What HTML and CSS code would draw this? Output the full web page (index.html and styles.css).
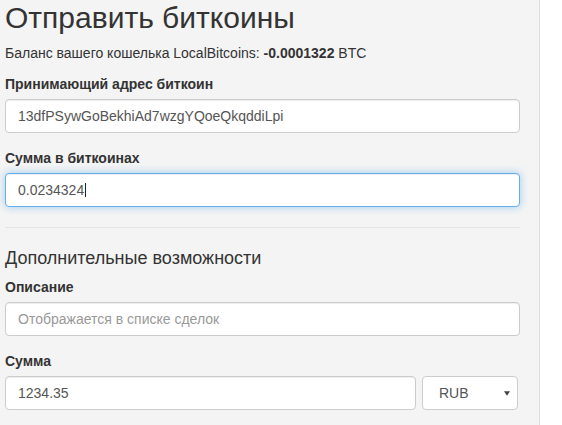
FILE: index.html
```html
<!DOCTYPE html>
<html lang="ru">
<head>
<meta charset="utf-8">
<title>Отправить биткоины</title>
<link rel="stylesheet" href="styles.css">
</head>
<body>
<div class="panel">
  <h1 class="title">Отправить биткоины</h1>
  <p class="balance">Баланс вашего кошелька LocalBitcoins: <b>-0.0001322</b> BTC</p>

  <div class="group">
    <label class="label">Принимающий адрес биткоин</label>
    <input class="field" type="text" value="13dfPSywGoBekhiAd7wzgYQoeQkqddiLpi">
  </div>

  <div class="group">
    <label class="label">Сумма в биткоинах</label>
    <div class="field focused">0.0234324<span class="caret"></span></div>
  </div>

  <hr class="divider">

  <h3 class="subtitle">Дополнительные возможности</h3>

  <div class="group first">
    <label class="label">Описание</label>
    <input class="field" type="text" placeholder="Отображается в списке сделок">
  </div>

  <div class="group">
    <label class="label">Сумма</label>
    <div class="row">
      <input class="field amount" type="text" value="1234.35">
      <div class="select">
        <span>RUB</span>
        <svg class="arrow" width="7" height="5" viewBox="0 0 7 5"><path d="M0 0H7L3.5 5Z" fill="#444"/></svg>
      </div>
    </div>
  </div>
</div>
</body>
</html>
```

FILE: styles.css
```css
html, body {
  margin: 0;
  padding: 0;
  background: #ffffff;
}
body {
  font-family: "Liberation Sans", Arial, sans-serif;
  font-size: 14px;
  color: #333333;
}
.panel {
  box-sizing: border-box;
  width: 540px;
  min-height: 425px;
  background: #f4f4f4;
  border-right: 1px solid #dddddd;
  padding: 0 19px 0 5px;
}
.title {
  margin: 0;
  font-size: 30px;
  font-weight: normal;
  line-height: 35px;
  color: #333333;
}
.balance {
  margin: 8px 0 0;
  font-size: 14px;
  line-height: 20px;
}
.group {
  margin-top: 12px;
}
.group + .group {
  margin-top: 16px;
}
.group.first {
  margin-top: 10px;
}
.label {
  display: block;
  font-size: 14px;
  font-weight: bold;
  line-height: 18px;
  margin-bottom: 6px;
}
.field {
  display: block;
  box-sizing: border-box;
  width: 100%;
  height: 34px;
  margin: 0;
  padding: 6px 12px;
  font-family: "Liberation Sans", Arial, sans-serif;
  font-size: 14px;
  line-height: 20px;
  color: #555555;
  background: #ffffff;
  border: 1px solid #cccccc;
  border-radius: 4px;
  box-shadow: inset 0 1px 1px rgba(0,0,0,0.075);
  outline: none;
}
.field::placeholder {
  color: #999999;
}
.focused {
  border-color: #66afe9;
  box-shadow: inset 0 1px 1px rgba(0,0,0,0.075), 0 0 8px rgba(102,175,233,0.6);
}
.caret {
  display: inline-block;
  width: 1px;
  height: 14px;
  margin-left: 1px;
  background: #222222;
  vertical-align: -2px;
}
.divider {
  margin: 20px 0 0;
  border: 0;
  border-top: 1px solid #e5e5e5;
  height: 0;
}
.subtitle {
  margin: 20px 0 0;
  font-size: 18px;
  font-weight: normal;
  line-height: 20px;
}
.row {
  display: flex;
  gap: 6px;
}
.amount {
  width: 411px;
  flex: none;
}
.select {
  box-sizing: border-box;
  width: 96px;
  height: 34px;
  display: flex;
  align-items: center;
  justify-content: space-between;
  padding: 0 7px 0 16px;
  background: #ffffff;
  border: 1px solid #cccccc;
  border-radius: 4px;
  color: #555555;
  font-size: 14px;
}
.arrow {
  display: block;
  width: 6px;
  height: 5px;
}
```
